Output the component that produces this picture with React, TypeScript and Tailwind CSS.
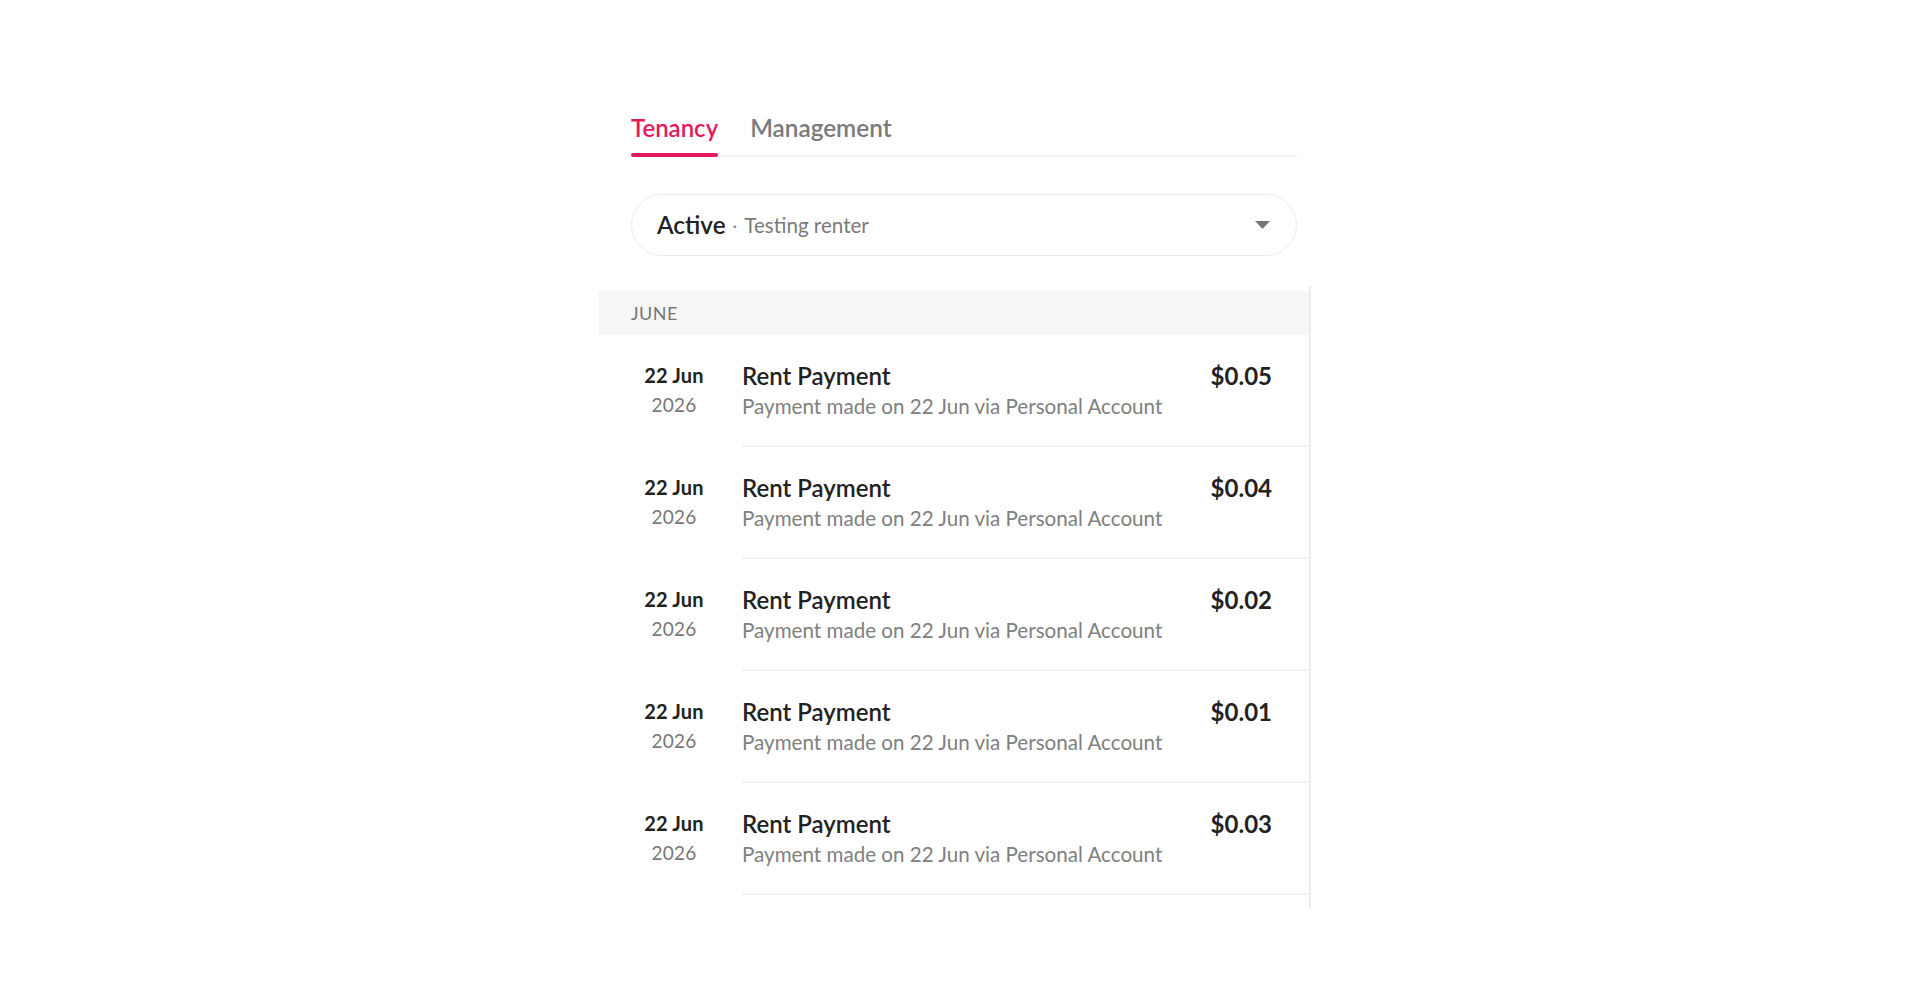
import React from 'react';

const rows = ['$0.05', '$0.04', '$0.02', '$0.01', '$0.03'];

export default function App() {
  return (
    <div className="min-h-screen bg-white text-[#222] font-['Lato',sans-serif]">
      <div className="mx-auto w-[712px] pt-[113px]">
        {/* tabs */}
        <div className="ml-[32px] w-[666px] flex gap-[32px] border-b-[2px] border-[#f2f2f2]">
          <div className="relative pb-[12px] text-[24px] font-semibold text-[#e5195e] leading-[30px]">
            Tenancy
            <div className="absolute left-0 right-0 -bottom-[2px] h-[4px] bg-[#e5195e] rounded-sm" />
          </div>
          <div className="pb-[12px] text-[24.3px] font-semibold text-[#7a7a7a] leading-[30px]">Management</div>
        </div>

        {/* selector */}
        <div className="ml-[32px] w-[666px] mt-[37px] h-[62px] rounded-full border border-[#ececec] flex items-center pl-[25px] pr-[26px]">
          <span className="text-[24.3px] font-semibold text-[#222] leading-[30px]">Active</span>
          <span className="mx-[7px] text-[18px] text-[#888]">·</span>
          <span className="text-[20.6px] text-[#7a7a7a] leading-[30px]">Testing renter</span>
          <svg className="ml-auto" width="15" height="8" viewBox="0 0 15 8">
            <path d="M0 0 L15 0 L7.5 8 Z" fill="#777" />
          </svg>
        </div>

        {/* list */}
        <div className="mt-[30px] border-r-[2px] border-[#ececec] pt-[5px] pb-[14px]">
          <div className="h-[44px] bg-[#f6f6f6] flex items-center pl-[32px] text-[18px] text-[#777] tracking-wide">
            JUNE
          </div>
          {rows.map((amt, i) => (
            <div key={i} className="flex h-[112px]">
              <div className="ml-[33px] w-[84px] pt-[28px] flex flex-col items-center">
                <span className="text-[20px] font-bold text-[#222] leading-[24px] tracking-[0.2px]">22 Jun</span>
                <span className="mt-[6px] text-[19px] text-[#777] leading-[24px] tracking-[0.2px]">2026</span>
              </div>
              <div className="ml-[26px] flex-1 flex border-b-[2px] border-[#f2f2f2] pr-[37px] pt-[27px]">
                <div className="flex flex-col">
                  <span className="text-[24px] font-semibold text-[#222] leading-[28px]">Rent Payment</span>
                  <span className="mt-[3px] text-[20.6px] text-[#808080] leading-[26px]">
                    Payment made on 22 Jun via Personal Account
                  </span>
                </div>
                <span className="ml-auto text-[24px] font-bold text-[#222] leading-[28px]">{amt}</span>
              </div>
            </div>
          ))}
        </div>
      </div>
    </div>
  );
}
